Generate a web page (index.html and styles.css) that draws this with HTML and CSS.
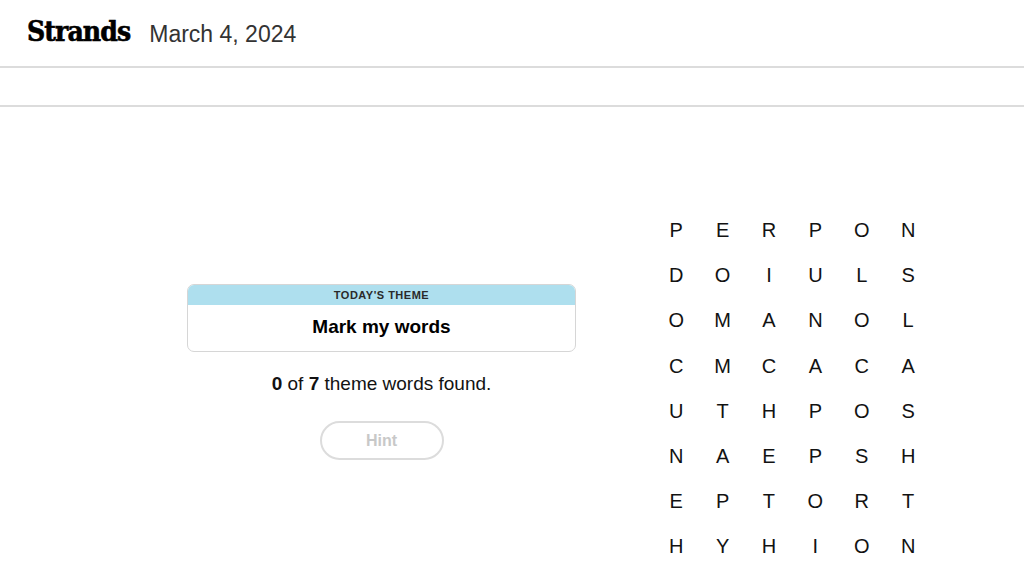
FILE: index.html
```html
<!DOCTYPE html>
<html>
<head>
<meta charset="utf-8">
<link rel="stylesheet" href="styles.css">
</head>
<body>
<header class="top">
  <h1 class="logo">Strands</h1>
  <span class="date">March 4, 2024</span>
</header>
<div class="toolbar"></div>
<main class="game">
  <section class="info">
    <div class="theme">
      <div class="theme-label">TODAY'S THEME</div>
      <div class="theme-title">Mark my words</div>
    </div>
    <p class="progress"><b>0</b> of <b>7</b> theme words found.</p>
    <button class="hint">Hint</button>
  </section>
  <section class="board">
    <span>P</span><span>E</span><span>R</span><span>P</span><span>O</span><span>N</span>
    <span>D</span><span>O</span><span>I</span><span>U</span><span>L</span><span>S</span>
    <span>O</span><span>M</span><span>A</span><span>N</span><span>O</span><span>L</span>
    <span>C</span><span>M</span><span>C</span><span>A</span><span>C</span><span>A</span>
    <span>U</span><span>T</span><span>H</span><span>P</span><span>O</span><span>S</span>
    <span>N</span><span>A</span><span>E</span><span>P</span><span>S</span><span>H</span>
    <span>E</span><span>P</span><span>T</span><span>O</span><span>R</span><span>T</span>
    <span>H</span><span>Y</span><span>H</span><span>I</span><span>O</span><span>N</span>
  </section>
</main>
</body>
</html>
```
FILE: styles.css
```css
* { box-sizing: border-box; }
html, body { margin: 0; padding: 0; background: #fff; }
body {
  font-family: "Liberation Sans", Arial, sans-serif;
  color: #121212;
  width: 1024px;
  height: 576px;
  overflow: hidden;
}
.top {
  height: 68px;
  border-bottom: 2px solid #dcdcdc;
  display: flex;
  align-items: center;
  padding-left: 27px;
  padding-bottom: 4px;
}
.logo {
  margin: 0;
  font-family: "DejaVu Serif", "Liberation Serif", serif;
  font-stretch: condensed;
  font-weight: 700;
  font-size: 28px;
  letter-spacing: -0.9px;
  color: #000;
  -webkit-text-stroke: 0.6px #000;
}
.date {
  margin-left: 19px;
  margin-top: 6px;
  font-size: 23px;
  color: #333;
}
.toolbar {
  height: 39px;
  border-bottom: 2px solid #dcdcdc;
}
.game {
  display: flex;
  padding-left: 187px;
}
.info {
  width: 389px;
  margin-top: 177px;
  display: flex;
  flex-direction: column;
  align-items: center;
}
.theme {
  width: 389px;
  border: 1px solid #d6d6d6;
  border-radius: 7px;
  overflow: hidden;
  text-align: center;
}
.theme-label {
  background: #aedfee;
  height: 20px;
  line-height: 20px;
  font-size: 11px;
  font-weight: 700;
  letter-spacing: 0.5px;
  color: #2a2a2a;
}
.theme-title {
  height: 46px;
  line-height: 44px;
  font-size: 19px;
  font-weight: 700;
  color: #000;
}
.progress {
  margin: 21px 0 0;
  font-size: 19px;
  line-height: 22px;
  color: #121212;
}
.hint {
  margin-top: 26px;
  width: 124px;
  height: 39px;
  border: 2px solid #dcdcdc;
  border-radius: 20px;
  background: #fff;
  font-family: "Liberation Sans", Arial, sans-serif;
  font-size: 16px;
  font-weight: 700;
  color: #c8c8c8;
}
.board {
  margin-left: 77px;
  margin-top: 101px;
  display: grid;
  grid-template-columns: repeat(6, 46.4px);
  grid-auto-rows: 45.2px;
  font-size: 20px;
  color: #121212;
}
.board span {
  display: flex;
  align-items: center;
  justify-content: center;
}
```
